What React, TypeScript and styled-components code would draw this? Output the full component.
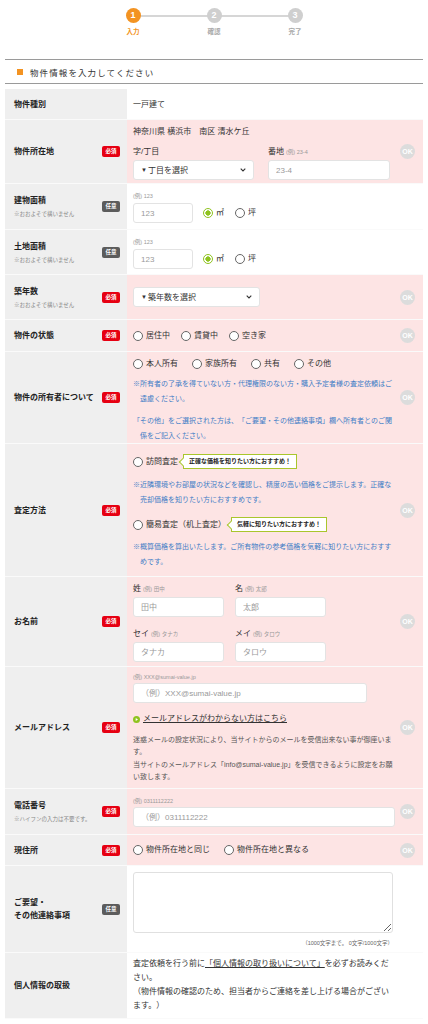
import React from "react";
import styled, { createGlobalStyle } from "styled-components";

type Tone = "pink" | "white";
type BadgeKind = "required" | "optional";

const GlobalStyle = createGlobalStyle`
  * { box-sizing: border-box; }
  html, body { margin: 0; padding: 0; background: #fff; }
  body {
    font-family: "Liberation Sans", "Noto Sans CJK JP", sans-serif;
    color: #333;
    text-spacing-trim: space-all;
  }
`;

const Page = styled.div`
  padding: 8px 5px 0;
`;

/* ---------- stepper ---------- */

const Stepper = styled.ol`
  list-style: none;
  margin: 0;
  padding: 0;
  display: flex;
  justify-content: center;
`;

const Step = styled.li<{ $active?: boolean }>`
  position: relative;
  width: 81px;
  display: flex;
  flex-direction: column;
  align-items: center;
  gap: 4px;
  color: ${(p) => (p.$active ? "#f39322" : "#a8a8a8")};
  font-size: 6.5px;
  font-weight: 700;
  line-height: 9px;

  &:not(:first-child)::before {
    content: "";
    position: absolute;
    top: 6.5px;
    right: 50%;
    width: 100%;
    height: 2px;
    background: #d6d6d6;
  }
`;

const StepNum = styled.span<{ $active?: boolean }>`
  position: relative;
  z-index: 1;
  width: 15px;
  height: 15px;
  border-radius: 50%;
  background: ${(p) => (p.$active ? "#f39322" : "#cfcfcf")};
  color: #fff;
  font: 700 9px/15px "Liberation Sans", Arial, sans-serif;
  text-align: center;
`;

/* ---------- section title ---------- */

const SectionTitle = styled.h2`
  margin: 23px 0 5px;
  height: 25px;
  border-top: 1px solid #9a9a9a;
  border-bottom: 1px solid #9a9a9a;
  display: flex;
  align-items: center;
  gap: 7px;
  padding-left: 12px;
  font-size: 8.5px;
  font-weight: 400;
  letter-spacing: 1.1px;
  color: #333;
`;

const TitleMark = styled.span`
  width: 6px;
  height: 6px;
  background: #f39322;
`;

/* ---------- table ---------- */

const FormTable = styled.div`
  display: flex;
  flex-direction: column;
`;

const Row = styled.div`
  display: grid;
  grid-template-columns: 122px minmax(0, 1fr);
  border-bottom: 1px solid #fafafa;
`;

const LabelCell = styled.div`
  background: #efefef;
  display: flex;
  align-items: center;
  justify-content: space-between;
  gap: 4px;
  padding: 0 7px 0 9px;
`;

const LabelText = styled.div`
  display: flex;
  flex-direction: column;
`;

const LabelName = styled.span`
  font-size: 8px;
  line-height: 13px;
  font-weight: 700;
  color: #222;
  white-space: pre-line;
`;

const LabelSub = styled.span`
  margin-top: 3px;
  font-size: 5.5px;
  line-height: 9px;
  color: #888;
`;

const Badge = styled.span<{ $kind: BadgeKind }>`
  flex: none;
  width: 18px;
  height: 11px;
  border-radius: 2px;
  background: ${(p) => (p.$kind === "required" ? "#e60012" : "#5c5c5c")};
  color: #fff;
  font-size: 5.5px;
  font-weight: 700;
  line-height: 11px;
  text-align: center;
`;

const FieldCell = styled.div<{ $tone: Tone }>`
  background: ${(p) => (p.$tone === "pink" ? "#fde4e4" : "#fff")};
  display: flex;
  align-items: center;
  padding-left: 6px;
`;

const FieldBody = styled.div<{ $pad: string }>`
  flex: 1;
  min-width: 0;
  padding: ${(p) => p.$pad};
  display: flex;
  flex-direction: column;
  font-size: 8px;
  line-height: 13px;
  color: #333;
`;

const OkMark = styled.span<{ $shown: boolean }>`
  flex: none;
  width: 15px;
  height: 15px;
  margin: 0 8px 0 5px;
  border-radius: 50%;
  background: #dcdcdc;
  color: #fff;
  font: 700 7px/15px "Liberation Sans", Arial, sans-serif;
  text-align: center;
  visibility: ${(p) => (p.$shown ? "visible" : "hidden")};
`;

/* ---------- field parts ---------- */

const Plain = styled.p<{ $lh?: number; $mt?: number }>`
  margin: ${(p) => p.$mt ?? 0}px 0 0;
  font-size: 8px;
  line-height: ${(p) => p.$lh ?? 13}px;
  color: #333;
`;

const Pair = styled.div<{ $cols: string; $gap: number; $rowGap?: number; $mt?: number }>`
  display: grid;
  grid-template-columns: ${(p) => p.$cols};
  column-gap: ${(p) => p.$gap}px;
  row-gap: ${(p) => p.$rowGap ?? 0}px;
  margin-top: ${(p) => p.$mt ?? 0}px;
`;

const Field = styled.div<{ $gap?: number; $mt?: number }>`
  display: flex;
  flex-direction: column;
  gap: ${(p) => p.$gap ?? 2}px;
  margin-top: ${(p) => p.$mt ?? 0}px;
`;

const FieldLabel = styled.span<{ $lh?: number }>`
  font-size: 8px;
  line-height: ${(p) => p.$lh ?? 12}px;
  color: #333;
`;

const Example = styled.span`
  margin-left: 2px;
  font-size: 5.5px;
  color: #999;
`;

const Hint = styled.span`
  font-size: 5.5px;
  line-height: 8px;
  color: #999;
`;

const TextInput = styled.input<{ $w?: number }>`
  width: ${(p) => (p.$w ? `${p.$w}px` : "100%")};
  height: 20px;
  margin: 0;
  padding: 0 7px;
  border: 1px solid #e3e3e3;
  border-radius: 3px;
  background: #fff;
  font-family: inherit;
  font-size: 8px;
  color: #333;
  outline: none;

  &::placeholder {
    color: #9a9a9a;
  }
`;

const TextArea = styled.textarea`
  display: block;
  width: 260px;
  height: 61px;
  margin: 0;
  border: 1px solid #e0e0e0;
  border-radius: 3px;
  background: #fff;
  font-family: inherit;
  font-size: 8px;
  resize: vertical;
  outline: none;
`;

const Counter = styled.span`
  width: 260px;
  margin-top: 6px;
  font-size: 5.5px;
  line-height: 8px;
  color: #666;
  text-align: right;
`;

const SelectBox = styled.div<{ $w: number }>`
  width: ${(p) => p.$w}px;
  height: 20px;
  padding: 0 7px;
  border: 1px solid #e3e3e3;
  border-radius: 3px;
  background: #fff;
  display: flex;
  align-items: center;
  justify-content: space-between;
  font-size: 8px;
  color: #333;
`;

const SelectText = styled.span`
  display: inline-flex;
  align-items: center;
  gap: 1px;
`;

const SelectArrow = styled.span`
  font-size: 6px;
  line-height: 1;
`;

const InlineRow = styled.div<{ $gap: number; $mt?: number }>`
  display: flex;
  align-items: center;
  gap: ${(p) => p.$gap}px;
  margin-top: ${(p) => p.$mt ?? 0}px;
`;

const RadioLabel = styled.label<{ $lh?: number }>`
  display: inline-flex;
  align-items: center;
  gap: 3px;
  font-size: 8px;
  line-height: ${(p) => p.$lh ?? 14}px;
  color: #333;
  white-space: nowrap;
`;

const RadioMark = styled.span<{ $checked?: boolean }>`
  flex: none;
  width: 10px;
  height: 10px;
  border-radius: 50%;
  border: 1.2px solid ${(p) => (p.$checked ? "#8fc31f" : "#666")};
  background: ${(p) =>
    p.$checked
      ? "radial-gradient(circle, #8fc31f 0 2.4px, #fff 2.9px)"
      : "#fff"};
`;

const Note = styled.p<{ $mt?: number; $lh?: number }>`
  margin: ${(p) => p.$mt ?? 0}px 0 0;
  padding-left: 7px;
  text-indent: -7px;
  font-size: 7px;
  line-height: ${(p) => p.$lh ?? 15}px;
  color: #3f7dc6;
`;

const MailNote = styled.p`
  margin: 8px 0 0;
  font-size: 7px;
  line-height: 12.3px;
  color: #555;
`;

const Callout = styled.span`
  position: relative;
  margin-left: 5px;
  height: 15px;
  padding: 0 5px;
  border: 1.5px solid #a9c62c;
  background: #fff;
  font-size: 6px;
  font-weight: 700;
  line-height: 12px;
  color: #222;
  white-space: nowrap;

  &::before {
    content: "";
    position: absolute;
    left: -4px;
    top: 3.5px;
    width: 5px;
    height: 5px;
    background: #fff;
    border-left: 1.5px solid #a9c62c;
    border-bottom: 1.5px solid #a9c62c;
    transform: rotate(45deg);
  }
`;

const LinkLine = styled.div`
  margin-top: 9px;
  display: flex;
`;

const MailLink = styled.a`
  display: inline-flex;
  align-items: center;
  gap: 3px;
  font-size: 8px;
  line-height: 14px;
  color: #333;
  text-decoration: underline;
`;

const Underlined = styled.span`
  text-decoration: underline;
  text-underline-offset: 1px;
`;

/* ---------- small pieces ---------- */

const Chevron = () => (
  <svg width="6" height="4" viewBox="0 0 6 4">
    <polyline points="0.7,0.7 3,3 5.3,0.7" fill="none" stroke="#333" strokeWidth="1.1" />
  </svg>
);

const GoDot = () => (
  <svg width="7" height="7" viewBox="0 0 7 7">
    <circle cx="3.5" cy="3.5" r="3.5" fill="#8fc31f" />
    <polygon points="2.7,2 5,3.5 2.7,5" fill="#fff" />
  </svg>
);

type RadioProps = { checked?: boolean; children: React.ReactNode; $lh?: number };

const Radio: React.FC<RadioProps> = ({ checked, children, $lh }) => (
  <RadioLabel $lh={$lh}>
    <RadioMark $checked={checked} />
    {children}
  </RadioLabel>
);

const Select: React.FC<{ width: number; text: string }> = ({ width, text }) => (
  <SelectBox $w={width}>
    <SelectText>
      <SelectArrow>▼</SelectArrow>
      {text}
    </SelectText>
    <Chevron />
  </SelectBox>
);

type RowProps = {
  label: string;
  sub?: string;
  badge?: BadgeKind;
  tone?: Tone;
  ok?: boolean;
  pad: string;
  children: React.ReactNode;
};

const FormRow: React.FC<RowProps> = ({
  label,
  sub,
  badge,
  tone = "pink",
  ok = false,
  pad,
  children,
}) => (
  <Row>
    <LabelCell>
      <LabelText>
        <LabelName>{label}</LabelName>
        {sub && <LabelSub>{sub}</LabelSub>}
      </LabelText>
      {badge && <Badge $kind={badge}>{badge === "required" ? "必須" : "任意"}</Badge>}
    </LabelCell>
    <FieldCell $tone={tone}>
      <FieldBody $pad={pad}>{children}</FieldBody>
      <OkMark $shown={ok}>OK</OkMark>
    </FieldCell>
  </Row>
);

const steps = ["入力", "確認", "完了"];

const App: React.FC = () => {
  return (
    <Page>
      <GlobalStyle />
      <Stepper>
        {steps.map((name, i) => (
          <Step key={name} $active={i === 0}>
            <StepNum $active={i === 0}>{i + 1}</StepNum>
            {name}
          </Step>
        ))}
      </Stepper>

      <SectionTitle>
        <TitleMark />
        物件情報を入力してください
      </SectionTitle>

      <FormTable>
        <FormRow label="物件種別" tone="white" pad="9px 0 8px">
          <Plain>一戸建て</Plain>
        </FormRow>

        <FormRow label="物件所在地" badge="required" ok pad="6px 0 3px">
          <Plain $lh={12}>神奈川県 横浜市　南区 清水ケ丘</Plain>
          <Pair $cols="121px 122px" $gap={14} $mt={8}>
            <Field>
              <FieldLabel>字/丁目</FieldLabel>
              <Select width={121} text="丁目を選択" />
            </Field>
            <Field>
              <FieldLabel>
                番地<Example>(例) 23-4</Example>
              </FieldLabel>
              <TextInput placeholder="23-4" />
            </Field>
          </Pair>
        </FormRow>

        <FormRow
          label="建物面積"
          sub="※おおよそで構いません"
          badge="optional"
          tone="white"
          pad="8px 0 6px"
        >
          <Hint>(例) 123</Hint>
          <InlineRow $gap={10} $mt={3}>
            <TextInput $w={60} placeholder="123" />
            <InlineRow $gap={11}>
              <Radio checked>㎡</Radio>
              <Radio>坪</Radio>
            </InlineRow>
          </InlineRow>
        </FormRow>

        <FormRow
          label="土地面積"
          sub="※おおよそで構いません"
          badge="optional"
          tone="white"
          pad="8px 0 5px"
        >
          <Hint>(例) 123</Hint>
          <InlineRow $gap={10} $mt={3}>
            <TextInput $w={60} placeholder="123" />
            <InlineRow $gap={11}>
              <Radio checked>㎡</Radio>
              <Radio>坪</Radio>
            </InlineRow>
          </InlineRow>
        </FormRow>

        <FormRow
          label="築年数"
          sub="※おおよそで構いません"
          badge="required"
          ok
          pad="12px 0"
        >
          <Select width={127} text="築年数を選択" />
        </FormRow>

        <FormRow label="物件の状態" badge="required" ok pad="9px 0 8px">
          <InlineRow $gap={11}>
            <Radio>居住中</Radio>
            <Radio>賃貸中</Radio>
            <Radio>空き家</Radio>
          </InlineRow>
        </FormRow>

        <FormRow label="物件の所有者について" badge="required" ok pad="5px 0 0">
          <InlineRow $gap={14}>
            <Radio>本人所有</Radio>
            <Radio>家族所有</Radio>
            <Radio>共有</Radio>
            <Radio>その他</Radio>
          </InlineRow>
          <Note $mt={5}>
            ※所有者の了承を得ていない方・代理権限のない方・購入予定者様の査定依頼はご遠慮ください。
          </Note>
          <Note $mt={7}>
            「その他」をご選択された方は、「ご要望・その他連絡事項」欄へ所有者とのご関係をご記入ください。
          </Note>
        </FormRow>

        <FormRow label="査定方法" badge="required" ok pad="10px 0 7px">
          <InlineRow $gap={0}>
            <Radio $lh={15}>訪問査定</Radio>
            <Callout>正確な価格を知りたい方におすすめ！</Callout>
          </InlineRow>
          <Note $mt={8}>
            ※近隣環境やお部屋の状況などを確認し、精度の高い価格をご提示します。正確な売却価格を知りたい方におすすめです。
          </Note>
          <InlineRow $gap={0} $mt={10}>
            <Radio $lh={15}>簡易査定（机上査定）</Radio>
            <Callout>気軽に知りたい方におすすめ！</Callout>
          </InlineRow>
          <Note $mt={7}>
            ※概算価格を算出いたします。ご所有物件の参考価格を気軽に知りたい方におすすめです。
          </Note>
        </FormRow>

        <FormRow label="お名前" badge="required" ok pad="7px 0 4px">
          <Pair $cols="91px 91px" $gap={11} $rowGap={12}>
            <Field $gap={3}>
              <FieldLabel $lh={10}>
                姓<Example>(例) 田中</Example>
              </FieldLabel>
              <TextInput placeholder="田中" />
            </Field>
            <Field $gap={3}>
              <FieldLabel $lh={10}>
                名<Example>(例) 太郎</Example>
              </FieldLabel>
              <TextInput placeholder="太郎" />
            </Field>
            <Field $gap={3}>
              <FieldLabel $lh={10}>
                セイ<Example>(例) タナカ</Example>
              </FieldLabel>
              <TextInput placeholder="タナカ" />
            </Field>
            <Field $gap={3}>
              <FieldLabel $lh={10}>
                メイ<Example>(例) タロウ</Example>
              </FieldLabel>
              <TextInput placeholder="タロウ" />
            </Field>
          </Pair>
        </FormRow>

        <FormRow label="メールアドレス" badge="required" ok pad="6px 0 5px">
          <Field $gap={2}>
            <Hint>(例) XXX@sumai-value.jp</Hint>
            <TextInput $w={234} placeholder="（例）XXX@sumai-value.jp" />
          </Field>
          <LinkLine>
            <MailLink href="#">
              <GoDot />
              メールアドレスがわからない方はこちら
            </MailLink>
          </LinkLine>
          <MailNote>
            迷惑メールの設定状況により、当サイトからのメールを受信出来ない事が御座います。
            <br />
            当サイトのメールアドレス「info@sumai-value.jp」を受信できるように設定をお願い致します。
          </MailNote>
        </FormRow>

        <FormRow
          label="電話番号"
          sub="※ハイフンの入力は不要です。"
          badge="required"
          ok
          pad="8px 0 7px"
        >
          <Field $gap={2}>
            <Hint>(例) 0311112222</Hint>
            <TextInput placeholder="（例）0311112222" />
          </Field>
        </FormRow>

        <FormRow label="現住所" badge="required" ok pad="8px 0 8px">
          <InlineRow $gap={14}>
            <Radio>物件所在地と同じ</Radio>
            <Radio>物件所在地と異なる</Radio>
          </InlineRow>
        </FormRow>

        <FormRow
          label={"ご要望・\nその他連絡事項"}
          badge="optional"
          tone="white"
          pad="6px 0 5px"
        >
          <TextArea />
          <Counter>（1000文字まで。 0文字/1000文字）</Counter>
        </FormRow>

        <FormRow label="個人情報の取扱" tone="white" pad="4px 0 5px">
          <Plain $lh={14}>
            査定依頼を行う前に<Underlined>「個人情報の取り扱いについて」</Underlined>
            を必ずお読みください。
            <br />
            （物件情報の確認のため、担当者からご連絡を差し上げる場合がございます。）
          </Plain>
        </FormRow>
      </FormTable>
    </Page>
  );
};

export default App;
